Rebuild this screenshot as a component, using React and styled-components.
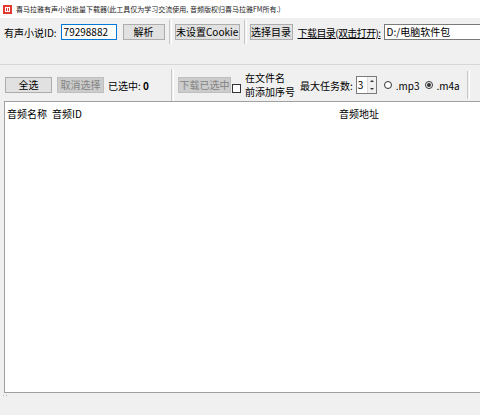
import React from "react";
import styled, { createGlobalStyle } from "styled-components";

const Global = createGlobalStyle`
  html, body { margin: 0; padding: 0; }
  body {
    width: 480px;
    height: 415px;
    overflow: hidden;
    background: #f0f0f0;
    font-family: "Noto Sans CJK SC", "Noto Sans", sans-serif;
    font-size: 10px;
    color: #000;
  }
`;

const Window = styled.div`
  width: 480px;
  height: 415px;
  display: flex;
  flex-direction: column;
  background: #f0f0f0;
  overflow: hidden;
`;

const TitleBar = styled.div`
  height: 18px;
  flex: none;
  background: #fff;
  display: flex;
  align-items: center;
  padding-left: 3px;
  gap: 4px;
  font-size: 7px;
  color: #222;
  white-space: nowrap;
`;

const Toolbar = styled.div`
  flex: none;
  display: flex;
  align-items: ${(p) => p.$align || "center"};
  height: ${(p) => p.$h}px;
  padding: ${(p) => p.$pad};
  box-sizing: border-box;
  white-space: nowrap;
  border-bottom: ${(p) => (p.$rule ? "1px solid #d7d7d7" : "none")};
`;

const Label = styled.span`
  margin-left: ${(p) => p.$ml || 0}px;
  font-size: 10px;
  line-height: 13px;
  letter-spacing: ${(p) => p.$ls || 0}px;
  text-decoration: ${(p) => (p.$link ? "underline" : "none")};
`;

const TextBox = styled.div`
  margin-left: ${(p) => p.$ml || 0}px;
  width: ${(p) => p.$w}px;
  height: 16px;
  box-sizing: border-box;
  border: 1px solid ${(p) => (p.$focus ? "#0078d7" : "#7a7a7a")};
  background: #fff;
  font-size: 10px;
  line-height: 14px;
  padding-left: 2px;
  overflow: hidden;
  flex: none;
`;

const Button = styled.div`
  margin-left: ${(p) => p.$ml || 0}px;
  width: ${(p) => p.$w}px;
  height: 16px;
  box-sizing: border-box;
  border: 1px solid ${(p) => (p.$disabled ? "#bfbfbf" : "#adadad")};
  background: ${(p) => (p.$disabled ? "#cccccc" : "#e1e1e1")};
  color: ${(p) => (p.$disabled ? "#838383" : "#000")};
  font-size: 10px;
  line-height: 14px;
  text-align: center;
  flex: none;
`;

const Sep = styled.div`
  margin-left: ${(p) => p.$ml || 0}px;
  width: 1px;
  height: ${(p) => p.$h}px;
  border-left: 1px solid #c8c8c8;
  border-right: 1px solid #fff;
  align-self: ${(p) => p.$self || "auto"};
  flex: none;
`;

const Check = styled.div`
  margin-left: ${(p) => p.$ml || 0}px;
  width: 9px;
  height: 9px;
  box-sizing: border-box;
  border: 1px solid #333;
  background: #fff;
  align-self: flex-end;
  margin-bottom: 8px;
  flex: none;
`;

const TwoLine = styled.div`
  margin-left: ${(p) => p.$ml || 0}px;
  display: flex;
  flex-direction: column;
  font-size: 10px;
  line-height: 14px;
`;

const Spinner = styled.div`
  margin-left: ${(p) => p.$ml || 0}px;
  width: 21px;
  height: 18px;
  box-sizing: border-box;
  border: 1px solid #7a7a7a;
  background: #fff;
  display: flex;
  flex: none;
`;

const SpinValue = styled.div`
  flex: 1;
  font-size: 10px;
  line-height: 16px;
  padding-left: 1px;
`;

const SpinArrows = styled.div`
  width: 8px;
  display: flex;
  flex-direction: column;
  justify-content: space-around;
  align-items: center;
  background: #f0f0f0;
  border-left: 1px solid #dcdcdc;
`;

const Arrow = styled.div`
  width: 0;
  height: 0;
  border-left: 2px solid transparent;
  border-right: 2px solid transparent;
  ${(p) => (p.$up ? "border-bottom: 2px solid #333;" : "border-top: 2px solid #333;")}
`;

const Radio = styled.div`
  margin-left: ${(p) => p.$ml || 0}px;
  display: flex;
  align-items: center;
  gap: 4px;
  font-size: 10px;
`;

const RadioDot = styled.div`
  width: 8px;
  height: 8px;
  box-sizing: border-box;
  border-radius: 50%;
  border: 1px solid #333;
  background: #fff;
  display: flex;
  align-items: center;
  justify-content: center;
  &::after {
    content: "";
    width: 4px;
    height: 4px;
    border-radius: 50%;
    background: ${(p) => (p.$on ? "#333" : "transparent")};
  }
`;

const Table = styled.div`
  flex: none;
  margin-left: 4px;
  width: 490px;
  height: 292px;
  box-sizing: border-box;
  border: 1px solid #a0a0a0;
  background: #fff;
`;

const HeaderRow = styled.div`
  display: flex;
  height: 22px;
  align-items: center;
  font-size: 10px;
  padding-left: 2px;
`;

const HeaderCell = styled.span`
  width: ${(p) => p.$w}px;
  flex: none;
`;

const Footer = styled.div`
  flex: 1;
  position: relative;
`;

const Grip = styled.div`
  position: absolute;
  left: 2px;
  top: 1px;
  width: 6px;
  height: 4px;
  background-image: radial-gradient(#b5b5b5 0.8px, transparent 0.9px);
  background-size: 3px 3px;
`;

function AppIcon() {
  return (
    <svg width="9" height="9" viewBox="0 0 9 9">
      <rect x="0" y="0" width="9" height="9" fill="#e23a2e" />
      <rect x="2" y="2" width="5" height="5" fill="#fff" />
      <rect x="3" y="3" width="1" height="3" fill="#e23a2e" />
      <rect x="5" y="3" width="1" height="3" fill="#e23a2e" />
    </svg>
  );
}

export default function App() {
  return (
    <>
      <Global />
      <Window>
        <TitleBar>
          <AppIcon />
          <span>喜马拉雅有声小说批量下载器(此工具仅为学习交流使用, 音频版权归喜马拉雅FM所有.)</span>
        </TitleBar>

        <Toolbar $h={47} $pad="0 0 0 4px" $align="flex-start" $rule>
          <Toolbar $h={28} $pad="0">
            <Label>有声小说ID:</Label>
            <TextBox $ml={4} $w={56} $focus>79298882</TextBox>
            <Button $ml={6} $w={42}>解析</Button>
            <Sep $ml={4} $h={24} />
            <Button $ml={3} $w={65}>未设置Cookie</Button>
            <Sep $ml={4} $h={24} />
            <Button $ml={3} $w={43}>选择目录</Button>
            <Label $ml={5} $ls={-0.6} $link>下载目录(双击打开):</Label>
            <TextBox $ml={3} $w={110}>D:/电脑软件包</TextBox>
          </Toolbar>
        </Toolbar>

        <Toolbar $h={36} $pad="4px 0 0 5px">
          <Button $w={47}>全选</Button>
          <Button $ml={5} $w={47} $disabled>取消选择</Button>
          <Label $ml={4}>
            已选中: <b>0</b>
          </Label>
          <Sep $ml={22} $h={36} $self="stretch" />
          <Button $ml={4} $w={53} $disabled>下载已选中</Button>
          <Check $ml={1} />
          <TwoLine $ml={4}>
            <span>在文件名</span>
            <span>前添加序号</span>
          </TwoLine>
          <Label $ml={5}>最大任务数:</Label>
          <Spinner $ml={3}>
            <SpinValue>3</SpinValue>
            <SpinArrows>
              <Arrow $up />
              <Arrow />
            </SpinArrows>
          </Spinner>
          <Radio $ml={7}>
            <RadioDot />
            .mp3
          </Radio>
          <Radio $ml={5}>
            <RadioDot $on />
            .m4a
          </Radio>
          <Sep $ml={7} $h={28} />
        </Toolbar>

        <Table>
          <HeaderRow>
            <HeaderCell $w={45}>音频名称</HeaderCell>
            <HeaderCell $w={287}>音频ID</HeaderCell>
            <HeaderCell $w={60}>音频地址</HeaderCell>
          </HeaderRow>
        </Table>

        <Footer>
          <Grip />
        </Footer>
      </Window>
    </>
  );
}
